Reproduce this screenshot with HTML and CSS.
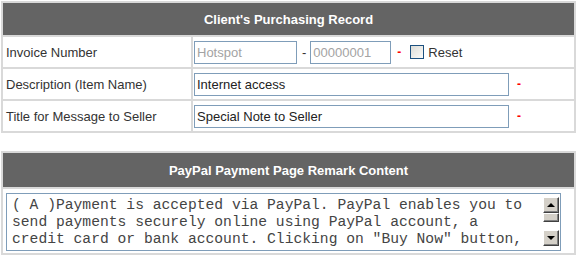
FILE: index.html
```html
<!DOCTYPE html>
<html lang="en">
<head>
    <meta charset="UTF-8">
    <title>Client's Purchasing Record</title>
    <link rel="stylesheet" href="styles.css">
</head>
<body>
    <div class="page">
        <table class="record">
            <colgroup>
                <col class="col-label">
                <col>
            </colgroup>
            <tr>
                <th colspan="2">Client's Purchasing Record</th>
            </tr>
            <tr>
                <td class="label">Invoice Number</td>
                <td class="field">
                    <div class="line">
                        <input type="text" class="txt prefix" value="Hotspot" disabled>
                        <span class="sep">-</span>
                        <input type="text" class="txt number" value="00000001" disabled>
                        <span class="req">-</span>
                        <label class="reset"><input type="checkbox" class="chk">Reset</label>
                    </div>
                </td>
            </tr>
            <tr>
                <td class="label">Description (Item Name)</td>
                <td class="field">
                    <div class="line">
                        <input type="text" class="txt wide" value="Internet access">
                        <span class="req far">-</span>
                    </div>
                </td>
            </tr>
            <tr>
                <td class="label">Title for Message to Seller</td>
                <td class="field">
                    <div class="line">
                        <input type="text" class="txt wide" value="Special Note to Seller">
                        <span class="req far">-</span>
                    </div>
                </td>
            </tr>
        </table>

        <table class="record remark">
            <tr>
                <th>PayPal Payment Page Remark Content</th>
            </tr>
            <tr>
                <td class="memo-cell">
                    <div class="memo">
                        <textarea class="memo-text">( A )Payment is accepted via PayPal. PayPal enables you to send payments securely online using PayPal account, a credit card or bank account. Clicking on "Buy Now" button, you will be redirected to the PayPal website to complete the payment.</textarea>
                        <div class="scroll">
                            <div class="btn"><span class="arrow up"></span></div>
                            <div class="thumb"></div>
                            <div class="track"></div>
                            <div class="btn"><span class="arrow down"></span></div>
                        </div>
                    </div>
                </td>
            </tr>
        </table>
    </div>
</body>
</html>
```

FILE: styles.css
```css
body {
    margin: 0;
    font-family: "Liberation Sans", Arial, sans-serif;
    font-size: 13px;
    color: #333;
    background: #fff;
}
.page {
    padding: 1px 0 0 1px;
}
table.record {
    width: 575px;
    table-layout: fixed;
    border-collapse: collapse;
    border: 2px solid #d9d9d9;
}
.col-label {
    width: 190px;
}
table.record th {
    background-color: #646464;
    color: #fff;
    font-weight: bold;
    height: 32px;
    padding: 0;
    text-align: center;
    border: 2px solid #d9d9d9;
}
table.record td {
    border: 2px solid #d9d9d9;
    height: 30px;
    padding: 0;
}
table.record td.label {
    padding-left: 3px;
}
table.record td.field {
    padding-left: 1px;
}
.line {
    display: flex;
    align-items: center;
}
.txt {
    box-sizing: border-box;
    height: 23px;
    margin: 0;
    padding: 0 2px;
    border: 1px solid #7f9db9;
    background: #fff;
    font-family: "Liberation Sans", Arial, sans-serif;
    font-size: 13px;
    color: #222;
    outline: none;
}
.txt:disabled {
    color: #a3a3a3;
    background: #fff;
}
.prefix {
    width: 103px;
}
.number {
    width: 81px;
}
.wide {
    width: 315px;
}
.sep {
    margin: 0 4px 0 5px;
}
.req {
    color: #f00;
    font-size: 12px;
    font-weight: bold;
    margin-left: 6px;
}
.req.far {
    margin-left: 8px;
}
.reset {
    display: flex;
    align-items: center;
    margin-left: 9px;
}
.chk {
    appearance: none;
    -webkit-appearance: none;
    box-sizing: border-box;
    width: 14px;
    height: 14px;
    margin: 0 4px 0 0;
    border: 1px solid #1c5180;
    background: linear-gradient(135deg, #dcdcd7, #fbfbf9);
}
.remark {
    margin-top: 18px;
}
table.remark th {
    height: 34px;
}
table.record td.memo-cell {
    padding: 4px 3px 2px 3px;
}
.memo {
    display: flex;
    align-items: flex-start;
    box-sizing: border-box;
    width: 555px;
    height: 58px;
    border: 1px solid #7f9db9;
    background: #fff;
}
.memo-text {
    flex: 1;
    box-sizing: border-box;
    height: 54px;
    margin: 0;
    padding: 3px 10px 0 5px;
    border: none;
    outline: none;
    resize: none;
    overflow: hidden;
    font-family: "Liberation Mono", "Courier New", monospace;
    font-size: 14.67px;
    line-height: 17px;
    color: #444;
}
.scroll {
    display: flex;
    flex-direction: column;
    align-self: stretch;
    width: 16px;
    padding: 3px 1px 4px 0;
}
.btn,
.thumb {
    box-sizing: border-box;
    background: #d4d0c8;
    border: 1px solid;
    border-color: #fff #404040 #404040 #fff;
    box-shadow: inset -1px -1px 0 #808080;
}
.btn {
    height: 16px;
    display: flex;
    align-items: center;
    justify-content: center;
}
.thumb {
    height: 9px;
}
.track {
    flex: 1;
    background: #fff;
}
.arrow {
    width: 0;
    height: 0;
    border-left: 4px solid transparent;
    border-right: 4px solid transparent;
}
.arrow.up {
    border-bottom: 4px solid #000;
}
.arrow.down {
    border-top: 4px solid #000;
}
```
